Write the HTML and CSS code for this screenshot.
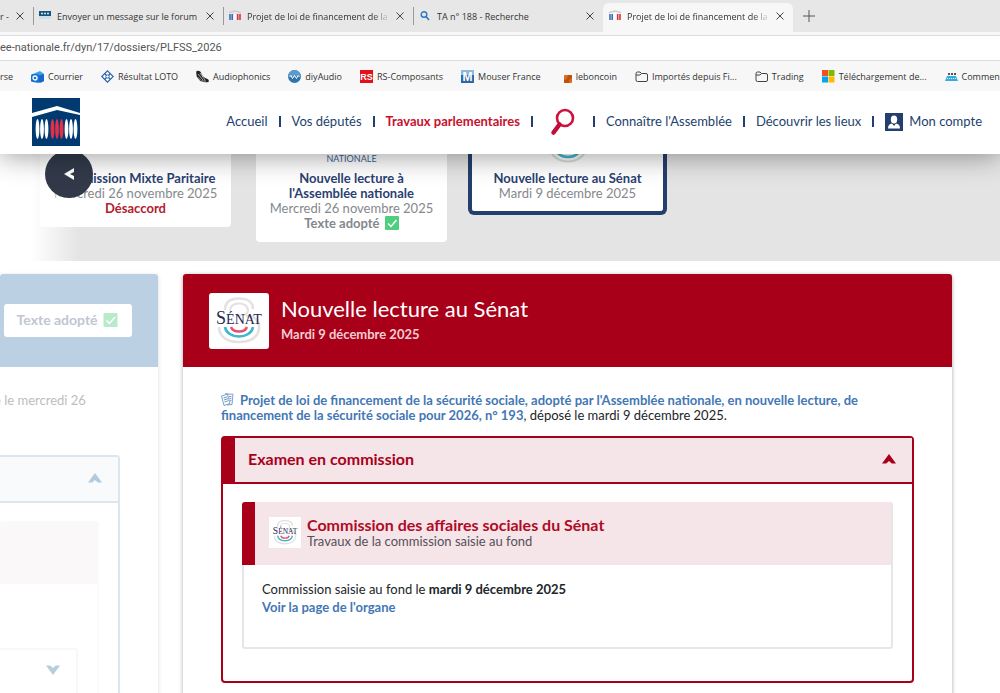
FILE: index.html
```html
<!DOCTYPE html>
<html lang="fr">
<head>
	<meta charset="utf-8">
	<title>Projet de loi de financement de la sécurité sociale pour 2026</title>
	<meta name="viewport" content="width=device-width, initial-scale=1">
	<link rel="stylesheet" href="styles.css">
</head>
<body>
	<!-- shared drawings -->
	<svg class="sprite" aria-hidden="true">
		<symbol id="cross" viewBox="0 0 8 8"><path d="M0.5 0.5L7.5 7.5M7.5 0.5L0.5 7.5" stroke="#444" stroke-width="1" fill="none"/></symbol>
		<symbol id="an" viewBox="0 0 12 12">
			<path d="M0 2.500L6 1L12 2.500" fill="none" stroke="#ccc" stroke-width="1.500"/>
			<path d="M1 4v6M3.200 4v6" stroke="#3a6fb5" stroke-width="1.600"/>
			<path d="M6 4v6" stroke="#fff" stroke-width="1.600"/>
			<path d="M8.700 4v6M11 4v6" stroke="#d8333f" stroke-width="1.600"/>
		</symbol>
		<symbol id="folder" viewBox="0 0 13 13"><path d="M1 3.500q0-1.500 1.500-1.500h2.500l1.500 1.500h4.500q1.500 0 1.500 1.500v5q0 1.500-1.500 1.500h-8.500q-1.500 0-1.500-1.500zM1 5h4l1.500-1.500" fill="none" stroke="#444" stroke-width="1"/></symbol>
		<symbol id="check" viewBox="0 0 14 14"><rect width="14" height="14" rx="1" fill="#4fce7d"/><path d="M3 7.500l3 3 5.500-6.500" fill="none" stroke="#fff" stroke-width="1.500"/></symbol>
		<symbol id="chevron" viewBox="0 0 14 10"><path d="M7 0L14 9.500H9.800L7 7L4.200 9.500H0z" fill="currentColor"/></symbol>
		<symbol id="senat" viewBox="0 0 60 56">
			<path d="M16 17C16 8 22 5.500 30 5.500S44 9 44 16" fill="none" stroke="#e4e2e0" stroke-width="2.600"/>
			<path d="M21 18C21 12 25 10.500 30 10.500S38 12 39 17C39 23 32 22 27 23" fill="none" stroke="#e4e2e0" stroke-width="2"/>
			<path d="M37 23C46 23 51 28 50 36C49 45 40 49 30 49S10 45 10 34" fill="none" stroke="#e4e2e0" stroke-width="2.600"/>
			<path d="M16 34C17 40 23 43.500 30 43.500S43 40 44 34" fill="none" stroke="#3fb6cf" stroke-width="2.600"/>
			<path d="M22 34C23 37 26 38.500 30 38.500S37 37 38 34" fill="none" stroke="#e8506e" stroke-width="2.400"/>
			<text x="30" y="31" text-anchor="middle" font-family="Liberation Serif, serif" fill="#26264e"><tspan font-size="18">S</tspan><tspan font-size="14">ÉNAT</tspan></text>
		</symbol>
	</svg>

	<div class="browser">
		<div class="tabs">
			<div class="tab tab-cut">
				<button class="tab-title">r -</button>
				<button class="tab-close" aria-label="Fermer"><svg width="8" height="8"><use href="#cross"/></svg></button>
			</div>
			<div class="tab">
				<svg width="12" height="12" viewBox="0 0 12 12"><rect y="1" width="12" height="5" fill="#17577c"/><path d="M2 3.500h8" stroke="#cfe3ee" stroke-width="1.500" stroke-dasharray="2 1"/><rect y="6" width="12" height="3" fill="#cbe0ec"/></svg>
				<button class="tab-title">Envoyer un message sur le forum</button>
				<button class="tab-close" aria-label="Fermer"><svg width="8" height="8"><use href="#cross"/></svg></button>
			</div>
			<div class="tab">
				<svg width="12" height="12"><use href="#an"/></svg>
				<button class="tab-title fade">Projet de loi de financement de la</button>
				<button class="tab-close" aria-label="Fermer"><svg width="8" height="8"><use href="#cross"/></svg></button>
			</div>
			<div class="tab">
				<svg width="12" height="12" viewBox="0 0 12 12"><circle cx="5" cy="4.500" r="2.800" fill="none" stroke="#2b78c5" stroke-width="1.400"/><path d="M7 6.500l3 3.500" stroke="#2b78c5" stroke-width="1.600"/></svg>
				<button class="tab-title">TA n° 188 - Recherche</button>
				<button class="tab-close" aria-label="Fermer"><svg width="8" height="8"><use href="#cross"/></svg></button>
			</div>
			<div class="tab active">
				<svg width="12" height="12"><use href="#an"/></svg>
				<button class="tab-title fade">Projet de loi de financement de la</button>
				<button class="tab-close" aria-label="Fermer"><svg width="8" height="8"><use href="#cross"/></svg></button>
			</div>
			<button class="tab-new" aria-label="Nouvel onglet"><svg width="12" height="12" viewBox="0 0 12 12"><path d="M6 0v12M0 6h12" stroke="#555"/></svg></button>
		</div>
		<input class="address" type="text" aria-label="Adresse" value="ee-nationale.fr/dyn/17/dossiers/PLFSS_2026">
		<nav class="bookmarks">
			<a href="#">rse</a>
			<a href="#"><svg width="13" height="13" viewBox="0 0 13 13"><path d="M2 4L9 1l4 3v7l-3 1.500H3z" fill="#3aa0ee"/><path d="M6 6l7-2v7l-3 1.500H5z" fill="#1a63d0"/><rect y="4" width="8" height="8" rx="1.500" fill="#1473d3"/><circle cx="4" cy="8" r="2" fill="none" stroke="#fff" stroke-width="1.300"/></svg>Courrier</a>
			<a href="#"><svg width="13" height="13" viewBox="0 0 13 13"><path d="M6.500 0.800L12.200 6.500L6.500 12.200L0.800 6.500z" fill="#fff" stroke="#2a62a8" stroke-width="1.200"/><path d="M3.700 3.700l5.600 5.600M9.300 3.700L3.700 9.300" stroke="#2a62a8" stroke-width="1.200"/><circle cx="6.500" cy="6.500" r="1.700" fill="#fff" stroke="#2a62a8"/></svg>Résultat LOTO</a>
			<a href="#"><svg width="13" height="13" viewBox="0 0 13 13"><path d="M0.500 1q4-1 5 3q1 3 6 5q2 1 1 3q-7 1-10-3q-3-3-2-8z" fill="#222"/><path d="M2 4l5 6M4 3l5 7M1.500 7l3 3M5 11l5 0" stroke="#ccc" stroke-width="0.800"/></svg>Audiophonics</a>
			<a href="#"><svg width="13" height="13" viewBox="0 0 13 13"><circle cx="6.500" cy="6.500" r="6.500" fill="#2f74ad"/><path d="M0 6.500a6.500 6.500 0 0 1 13 0z" fill="#5b9bcb"/><path d="M1.500 7l1.500-1.500 1.500 3 2-3 2 3 1.500-3 1.500 1.500" fill="none" stroke="#fff"/></svg>diyAudio</a>
			<a href="#"><svg width="13" height="13" viewBox="0 0 13 13"><rect width="13" height="13" fill="#e1101a"/><text x="6.500" y="10" text-anchor="middle" font-family="Liberation Sans, sans-serif" font-weight="bold" font-size="9" fill="#fff">RS</text></svg>RS-Composants</a>
			<a href="#"><svg width="13" height="13" viewBox="0 0 13 13"><rect width="13" height="13" fill="#2d69a5"/><rect width="13" height="5" fill="#8db9dd"/><text x="6.500" y="11" text-anchor="middle" font-family="Liberation Sans, sans-serif" font-weight="bold" font-size="12" fill="#fff">M</text></svg>Mouser France</a>
			<a href="#"><svg width="13" height="13" viewBox="0 0 13 13"><rect x="5" y="5" width="8" height="8" rx="1" fill="#e06a16"/><path d="M5 10l3-1 1-4h4v3l-3 2v3h-5z" fill="#8c3b10" opacity="0.500"/></svg>leboncoin</a>
			<a href="#"><svg width="13" height="13"><use href="#folder"/></svg>Importés depuis Fi...</a>
			<a href="#"><svg width="13" height="13"><use href="#folder"/></svg>Trading</a>
			<a href="#"><svg width="13" height="13" viewBox="0 0 13 13"><rect width="6" height="6" fill="#f25022"/><rect x="6.500" width="6" height="6" fill="#7fba00"/><rect y="6.500" width="6" height="6" fill="#00a4ef"/><rect x="6.500" y="6.500" width="6" height="6" fill="#ffb900"/></svg>Téléchargement de...</a>
			<a href="#"><svg width="13" height="13" viewBox="0 0 13 13"><path d="M3 4h8" stroke="#555" stroke-width="2" stroke-dasharray="2 1"/><path d="M2 6h9l2 5H0z" fill="#35ace0"/><path d="M2 8.500h9" stroke="#d5f0fb" stroke-dasharray="1 1"/></svg>Comment</a>
		</nav>
	</div>

	<header class="site-header">
		<a href="#" aria-label="Assemblée nationale">
			<svg width="48" height="48" viewBox="0 0 48 48">
				<rect width="48" height="48" fill="#003a70"/>
				<path d="M0 15L25 8L48 15V17L25 12L0 19z" fill="#fff"/>
				<g fill="#fff"><ellipse cx="5.500" cy="31" rx="1.900" ry="10"/><ellipse cx="10" cy="31" rx="1.900" ry="10"/><ellipse cx="14.500" cy="31" rx="1.900" ry="10"/><ellipse cx="34.500" cy="31" rx="1.900" ry="10"/><ellipse cx="39" cy="31" rx="1.900" ry="10"/><ellipse cx="43.500" cy="31" rx="1.900" ry="10"/></g>
				<g fill="#e0304a"><ellipse cx="20.500" cy="31" rx="1.900" ry="10"/><ellipse cx="25" cy="31" rx="1.900" ry="10"/><ellipse cx="29.500" cy="31" rx="1.900" ry="10"/></g>
			</svg>
		</a>
		<nav class="site-nav">
			<a href="#">Accueil</a>
			<a href="#">Vos députés</a>
			<a href="#" class="current">Travaux parlementaires</a>
			<a href="#" class="search" aria-label="Recherche"><svg width="26" height="28" viewBox="0 0 26 28"><circle cx="15" cy="10" r="8" fill="none" stroke="#d0103f" stroke-width="2.600"/><path d="M9.500 16.500L3.500 24.500" stroke="#c00d3a" stroke-width="4.500" stroke-linecap="round"/></svg></a>
			<a href="#">Connaître l'Assemblée</a>
			<a href="#">Découvrir les lieux</a>
			<a href="#" class="account"><svg width="18" height="18" viewBox="0 0 18 18"><rect width="18" height="18" fill="#243f6d"/><ellipse cx="9" cy="6.500" rx="3.200" ry="4" fill="#fff"/><path d="M3 15.500q0-4.500 4-5l2 2.500 2-2.500q4 0.500 4 5z" fill="#fff"/></svg>Mon compte</a>
		</nav>
	</header>

	<section class="timeline">
		<article class="step">
			<div class="step-logo"></div>
			<h3>Commission Mixte Paritaire</h3>
			<p>Mercredi 26 novembre 2025</p>
			<p class="refused">Désaccord</p>
		</article>
		<article class="step">
			<div class="step-logo">NATIONALE</div>
			<h3>Nouvelle lecture à l'Assemblée nationale</h3>
			<p>Mercredi 26 novembre 2025</p>
			<p class="adopted">Texte adopté <svg width="14" height="14"><use href="#check"/></svg></p>
		</article>
		<article class="step selected">
			<div class="step-logo"><svg width="40" height="10" viewBox="0 0 40 10"><path d="M1 -6Q6 7.500 20 7.500T39 -6" fill="none" stroke="#deddda" stroke-width="2"/><path d="M8 -3Q12 3 20 3T32 -3" fill="none" stroke="#3fb6cf" stroke-width="2.500"/></svg></div>
			<h3>Nouvelle lecture au Sénat</h3>
			<p>Mardi 9 décembre 2025</p>
		</article>
		<div class="timeline-fade"></div>
		<button class="timeline-prev" aria-label="Étape précédente"><svg width="10" height="14" viewBox="0 0 10 14"><path d="M10 1V5L6 7L10 9V13L0 7z" fill="#fff"/></svg></button>
	</section>

	<main class="panels">
		<section class="panel previous">
			<div class="panel-head">
				<span class="tag">Texte adopté <svg width="15" height="14"><use href="#check"/></svg></span>
			</div>
			<div class="panel-body">
				<p class="intro">e le mercredi 26</p>
				<div class="box">
					<button class="box-head" aria-label="Replier"><svg class="chevron" width="14" height="10"><use href="#chevron"/></svg></button>
					<div class="box-body">
						<div class="organ">
							<div class="organ-head"></div>
							<div class="organ-body">
								<button class="sub-box" aria-label="Déplier"><svg class="chevron down" width="14" height="10"><use href="#chevron"/></svg></button>
							</div>
						</div>
					</div>
				</div>
			</div>
		</section>

		<section class="panel current-panel">
			<div class="panel-head">
				<svg class="panel-logo" viewBox="0 0 60 56"><use href="#senat"/></svg>
				<div class="panel-title">
					<h1>Nouvelle lecture au Sénat</h1>
					<p class="date">Mardi 9 décembre 2025</p>
				</div>
			</div>
			<div class="panel-body">
				<p class="intro"><a href="#"><svg class="doc" width="13" height="13" viewBox="0 0 13 13"><path d="M0.500 3l6-2 2.500 9.500-6 2zM4 0.800l8 0.500-1 10.200-5 0.500" fill="none" stroke="#5d8bbd" stroke-width="0.800"/><path d="M2.500 5l4-1.300M3 7l4-1.300M3.500 9l4-1.300M8 3.500l2.500 0.200M8.500 5.500l2 0.200M9 7.500l1.500 0.200" stroke="#5d8bbd" stroke-width="0.900"/></svg>Projet de loi de financement de la sécurité sociale, adopté par l'Assemblée nationale, en nouvelle lecture, de financement de la sécurité sociale pour 2026, n° 193</a>, déposé le mardi 9 décembre 2025.</p>
				<div class="box">
					<button class="box-head">Examen en commission<svg class="chevron" width="14" height="10"><use href="#chevron"/></svg></button>
					<div class="box-body">
						<div class="organ">
							<div class="organ-head">
								<svg class="organ-logo" viewBox="0 0 60 56"><use href="#senat"/></svg>
								<div>
									<h2>Commission des affaires sociales du Sénat</h2>
									<p>Travaux de la commission saisie au fond</p>
								</div>
							</div>
							<div class="organ-body">
								<p>Commission saisie au fond le <strong>mardi 9 décembre 2025</strong></p>
								<a href="#">Voir la page de l'organe</a>
							</div>
						</div>
					</div>
				</div>
			</div>
		</section>
	</main>
</body>
</html>
```

FILE: styles.css
```css
* {
	box-sizing: border-box;
}
body {
	margin: 0;
	overflow: hidden;
	background: #fff;
	color: #212529;
	font-family: Lato, "Liberation Sans", sans-serif;
	font-size: 13px;
	line-height: 15px;
}
h1, h2, h3, p {
	margin: 0;
}
a {
	text-decoration: none;
}
button {
	border: 0;
	padding: 0;
	background: none;
	font: inherit;
	color: inherit;
	text-align: left;
}
svg {
	flex-shrink: 0;
}
.sprite {
	position: absolute;
	width: 0;
	height: 0;
}

/* browser bars */
.browser {
	background: #f7f7f7;
	color: #333;
	font-family: "Open Sans", "Noto Sans", sans-serif;
	font-size: 9px;
}
.tabs {
	display: flex;
	height: 32px;
	background: #e7e7e7;
}
.tab {
	display: flex;
	align-items: center;
	gap: 6px;
	flex: 0 0 190px;
	min-width: 0;
	padding: 0 9px 0 5px;
	border-left: 1px solid transparent;
	border-image: linear-gradient(transparent 25%, #999 25%, #999 75%, transparent 75%) 1;
}
.tab-cut {
	flex-basis: 33px;
	gap: 2px;
	padding-left: 0;
	border: 0;
}
.tab.active {
	margin-top: 3px;
	padding-bottom: 3px;
	border: 0;
	border-radius: 6px 6px 0 0;
	background: #f7f7f7;
	padding-left: 6px;
}
.tab-title {
	flex: 1;
	min-width: 0;
	overflow: hidden;
	white-space: nowrap;
}
.tab-title.fade {
	-webkit-mask-image: linear-gradient(to right, #000 88%, transparent);
	mask-image: linear-gradient(to right, #000 88%, transparent);
}
.tab-close {
	display: flex;
}
.tab-new {
	display: flex;
	align-items: center;
	margin-left: 10px;
}
.address {
	display: block;
	width: 100%;
	height: 26px;
	margin-top: 3px;
	padding: 0 0 2px;
	border: solid #ddd;
	border-width: 1px 0;
	background: #fff;
	color: #555;
	font-family: Roboto, sans-serif;
	font-size: 11px;
}
.bookmarks {
	display: flex;
	align-items: center;
	gap: 18px;
	height: 30px;
	overflow: hidden;
	white-space: nowrap;
}
.bookmarks a {
	display: flex;
	align-items: center;
	gap: 4px;
	color: inherit;
}

/* site header */
.site-header {
	position: relative;
	z-index: 2;
	display: flex;
	align-items: center;
	justify-content: space-between;
	height: 63px;
	padding: 0 18px 2px 32px;
	background: #fff;
	box-shadow: 0 2px 28px rgba(0, 0, 0, 0.4);
	clip-path: inset(0 0 -40px 0);
}
.site-header > a, .site-nav a {
	display: flex;
	align-items: center;
	color: #243f6d;
}
.site-nav {
	display: flex;
	align-items: center;
}
.site-nav a + a::before {
	content: "";
	width: 2px;
	height: 11px;
	margin: 0 11px;
	background: #243f6d;
}
.site-nav .current {
	color: #c8102e;
	font-weight: bold;
}
.site-nav .search svg {
	margin: 0 6px;
}
.site-nav .account svg {
	margin-right: 6px;
}

/* timeline */
.timeline {
	position: relative;
	display: flex;
	align-items: flex-start;
	gap: 25px;
	height: 107px;
	padding-left: 40px;
	overflow: hidden;
	background: #e4e4e4;
}
.step {
	width: 191px;
	padding: 0 12px 11px;
	border-radius: 0 0 4px 4px;
	background: #fff;
	color: #85888c;
	text-align: center;
}
.step.selected {
	width: 199px;
	margin-left: -4px;
	padding-bottom: 10px;
	border: solid #243f6d;
	border-width: 0 4px 4px;
	border-radius: 0 0 6px 6px;
}
.step-logo {
	height: 17px;
	color: #3a6394;
	font-size: 9px;
	line-height: 9px;
}
.step h3 {
	color: #2b3f72;
	font-size: 13px;
	font-weight: bold;
}
.step .refused {
	color: #b3202e;
	font-weight: bold;
}
.step .adopted {
	font-weight: bold;
}
.adopted svg, .tag svg {
	margin-left: 2px;
	vertical-align: -2px;
}
.timeline-fade {
	position: absolute;
	inset: 0 auto 0 0;
	width: 80px;
	background: linear-gradient(to right, #fff 40%, rgba(255, 255, 255, 0));
}
.timeline-prev {
	position: absolute;
	top: -4px;
	left: 45px;
	display: flex;
	align-items: center;
	justify-content: center;
	width: 48px;
	height: 48px;
	border-radius: 50%;
	background: #323a4a;
}

/* panels */
.panels {
	display: flex;
	gap: 25px;
	padding: 13px 48px 0 0;
}
.panel {
	min-height: 480px;
	border-radius: 4px;
	background: #fff;
	box-shadow: 0 1px 4px rgba(0, 0, 0, 0.35);
}
.panel-head {
	display: flex;
	align-items: center;
	gap: 12px;
	height: 93px;
	padding: 0 26px;
	border-radius: 3px 3px 0 0;
}
.panel-body {
	padding: 26px 38px;
}
.intro a {
	color: #4377b5;
	font-weight: bold;
}
.intro .doc {
	margin-right: 6px;
	vertical-align: -1px;
}
.box {
	margin-top: 13px;
	border: 2px solid;
	border-radius: 4px;
}
.box-head {
	display: flex;
	align-items: center;
	justify-content: space-between;
	width: 100%;
	height: 46px;
	padding: 0 16px 3px 13px;
	border-bottom: 2px solid;
	font-size: 16px;
	font-weight: bold;
}
.box-body {
	padding: 18px 19px 32px;
}
.organ {
	border: 2px solid #e6e6e8;
	border-radius: 3px;
}
.organ-head {
	display: flex;
	align-items: center;
	gap: 6px;
	height: 63px;
}
.chevron.down {
	transform: rotate(180deg);
}

.current-panel {
	flex: 1;
}
.current-panel .panel-head {
	background: #a90019;
	color: #fff;
}
.panel-logo {
	width: 60px;
	height: 56px;
	border-radius: 3px;
	background: #fff;
}
.panel-title {
	padding-bottom: 3px;
}
.current-panel h1 {
	font-size: 22px;
	font-weight: normal;
	line-height: 30px;
}
.date {
	color: #f6ccd3;
	font-weight: bold;
	line-height: 20px;
}
.current-panel .box {
	border-color: #a90019;
}
.current-panel .box-head {
	border-color: #a90019;
	border-left: 12px solid #a90019;
	background: #f5e4e8;
	color: #a90019;
}
.current-panel .organ-head {
	margin: -2px 0 0 -2px;
	padding: 0 0 2px 14px;
	border-left: 13px solid #a90019;
	border-radius: 3px 0 0 0;
	background: #f5e4e8;
}
.organ-logo {
	width: 32px;
	height: 31px;
	background: #fff;
}
.organ-head h2 {
	color: #b00a25;
	font-size: 16px;
	line-height: 18px;
}
.organ-head p {
	color: #55505a;
}
.current-panel .organ-body {
	padding: 15px 18px 31px;
	line-height: 18px;
}
.organ-body a {
	color: #4377b5;
	font-weight: bold;
}

/* previous step, cut by the left edge */
.previous {
	width: 158px;
	box-shadow: 0 1px 4px rgba(0, 0, 0, 0.15);
	border-radius: 0 4px 0 0;
}
.previous .panel-head {
	justify-content: flex-end;
	background: #bcd0e4;
}
.tag {
	padding: 8px 14px 10px 13px;
	border-radius: 3px;
	background: #fff;
	color: #c0c6d3;
	font-size: 14px;
	font-weight: bold;
	white-space: nowrap;
}
.tag svg, .previous .chevron {
	opacity: 0.4;
}
.previous .panel-body {
	padding-left: 0;
}
.previous .intro {
	margin-left: -6px;
	color: #bcbec0;
	white-space: nowrap;
}
.previous .box {
	margin-top: 47px;
	border-color: #dce6ef;
	border-left: 0;
	border-radius: 0 4px 0 0;
}
.previous .box-head {
	justify-content: flex-end;
	border-color: #dce6ef;
	background: #f8fafc;
}
.previous .chevron {
	color: #4b83ae;
}
.previous .box-body {
	padding-left: 0;
	padding-bottom: 0;
}
.previous .organ {
	border-color: #fafafa;
	border-left: 0;
}
.previous .organ-head {
	height: 61px;
	background: #fbf8fa;
}
.previous .organ-body {
	padding: 64px 19px 0 0;
}
.sub-box {
	display: flex;
	justify-content: flex-end;
	width: 100%;
	height: 80px;
	padding: 15px 16px;
	border: 2px solid #f8f8f8;
	border-left: 0;
	border-radius: 0 3px 0 0;
}
```
